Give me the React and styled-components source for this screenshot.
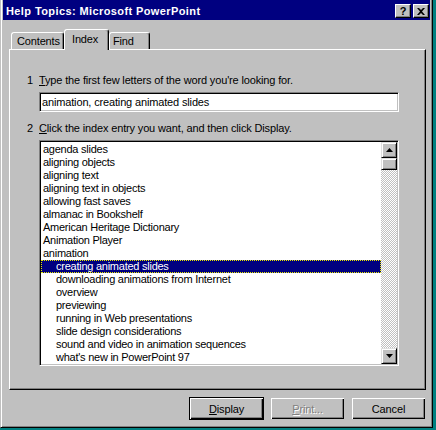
import React from 'react';
import styled, { createGlobalStyle } from 'styled-components';

const GlobalStyle = createGlobalStyle`
  html, body {
    margin: 0;
    background: #008080;
    overflow: hidden;
  }
  body {
    font-family: "Liberation Sans", Arial, sans-serif;
    font-size: 11px;
    letter-spacing: -0.15px;
    color: #000;
  }
`;

const Window = styled.div`
  width: 433px;
  height: 431px;
  margin-top: -3px;
  box-sizing: border-box;
  background: #c0c0c0;
  border: 1px solid;
  border-color: #c0c0c0 #000 #000 #c0c0c0;
  box-shadow: inset 1px 1px #fff, inset -1px -1px #808080;
  padding: 2px;
  display: flex;
  flex-direction: column;
`;

const TitleBar = styled.div`
  height: 20px;
  background: #000080;
  display: flex;
  align-items: center;
  padding: 2px 1px 0 3px;
  box-sizing: border-box;
`;

const Title = styled.div`
  flex: 1;
  color: #fff;
  font-weight: bold;
  font-size: 11px;
  letter-spacing: 0.4px;
`;

const TitleButton = styled.div`
  width: 16px;
  height: 14px;
  box-sizing: border-box;
  margin-left: ${(p) => (p.$gap ? '2px' : '0')};
  background: #c0c0c0;
  border: 1px solid;
  border-color: #fff #000 #000 #fff;
  box-shadow: inset -1px -1px #808080;
  display: flex;
  align-items: center;
  justify-content: center;
  font-weight: bold;
  font-size: 11px;
  line-height: 1;
`;

const Body = styled.div`
  padding: 9px 4px 0 6px;
  display: flex;
  flex-direction: column;
`;

const TabRow = styled.div`
  display: flex;
  align-items: flex-end;
  padding-left: 2px;
`;

const Tab = styled.div`
  position: relative;
  z-index: ${(p) => (p.$active ? 1 : 0)};
  width: ${(p) => p.$w}px;
  height: ${(p) => (p.$active ? 21 : 17)}px;
  margin-bottom: ${(p) => (p.$active ? -1 : 0)}px;
  box-sizing: border-box;
  background: #c0c0c0;
  border: 1px solid;
  border-bottom: none;
  border-color: #fff #000 transparent #fff;
  border-radius: 3px 3px 0 0;
  box-shadow: inset -1px 0 #808080;
  padding-left: ${(p) => p.$pad}px;
  padding-bottom: ${(p) => (p.$active ? 3 : 0)}px;
  display: flex;
  align-items: center;
`;

const Panel = styled.div`
  width: 417px;
  height: 341px;
  box-sizing: border-box;
  border: 1px solid;
  border-color: #fff #000 #000 #fff;
  box-shadow: inset -1px -1px #808080;
  padding: 24px 0 0 17px;
  display: flex;
  flex-direction: column;
`;

const Step = styled.div`
  display: grid;
  grid-template-columns: 12px 1fr;
  line-height: 13px;
  margin-top: ${(p) => p.$top}px;
`;

const Accel = styled.span`
  text-decoration: underline;
  text-underline-offset: 1px;
`;

const Sunken = styled.div`
  margin-left: 12px;
  width: 360px;
  box-sizing: border-box;
  background: #fff;
  border: 1px solid;
  border-color: #808080 #fff #fff #808080;
  box-shadow: inset 1px 1px #000, inset -1px -1px #c0c0c0;
  padding: 1px;
`;

const InputBox = styled(Sunken)`
  height: 20px;
  margin-top: 5px;
  display: flex;
  align-items: center;
  padding-left: 2px;
`;

const ListBox = styled(Sunken)`
  height: 226px;
  margin-top: 5px;
  display: flex;
  letter-spacing: -0.25px;
`;

const Rows = styled.div`
  flex: 1;
  display: flex;
  flex-direction: column;
  padding-top: 1px;
`;

const Row = styled.div`
  height: 13px;
  line-height: 13px;
  box-sizing: border-box;
  padding-left: ${(p) => (p.$sub ? 15 : 2)}px;
  white-space: nowrap;
  background: ${(p) => (p.$selected ? '#000080' : 'transparent')};
  color: ${(p) => (p.$selected ? '#fff' : '#000')};
  outline: ${(p) => (p.$selected ? '1px dotted #e8e800' : 'none')};
  outline-offset: -1px;
`;

const ScrollBar = styled.div`
  width: 16px;
  display: flex;
  flex-direction: column;
`;

const Raised = styled.div`
  box-sizing: border-box;
  background: #c0c0c0;
  border: 1px solid;
  border-color: #dfdfdf #000 #000 #dfdfdf;
  box-shadow: inset 1px 1px #fff, inset -1px -1px #808080;
`;

const ArrowButton = styled(Raised)`
  height: 16px;
  display: flex;
  align-items: center;
  justify-content: center;
`;

const Track = styled.div`
  flex: 1;
  background: repeating-conic-gradient(#fff 0 25%, #c0c0c0 0 50%) 0 0 / 2px 2px;
`;

const Thumb = styled(Raised)`
  height: 12px;
`;

const ButtonRow = styled.div`
  display: flex;
  justify-content: flex-end;
  gap: 6px;
  margin-top: 7px;
  width: 417px;
`;

const Button = styled.div`
  width: 75px;
  height: 23px;
  box-sizing: border-box;
  background: #c0c0c0;
  border: 1px solid ${(p) => (p.$default ? '#000' : 'transparent')};
  box-shadow: inset 1px 1px #fff, inset -1px -1px #000, inset -2px -2px #808080;
  display: flex;
  align-items: center;
  justify-content: center;
  color: ${(p) => (p.$disabled ? '#808080' : '#000')};
  text-shadow: ${(p) => (p.$disabled ? '1px 1px #fff' : 'none')};
`;

const Arrow = ({ down }) => (
  <svg width="7" height="4" viewBox="0 0 7 4" style={{ display: 'block' }}>
    <polygon points={down ? '0,0 7,0 3.5,4' : '0,4 7,4 3.5,0'} fill="#000" />
  </svg>
);

const CloseGlyph = () => (
  <svg width="8" height="7" viewBox="0 0 8 7" style={{ display: 'block' }}>
    <path d="M0 0h2l2 2 2-2h2L5 3.5 8 7H6L4 5 2 7H0l3-3.5z" fill="#000" />
  </svg>
);

const entries = [
  { t: 'agenda slides' },
  { t: 'aligning objects' },
  { t: 'aligning text' },
  { t: 'aligning text in objects' },
  { t: 'allowing fast saves' },
  { t: 'almanac in Bookshelf' },
  { t: 'American Heritage Dictionary' },
  { t: 'Animation Player' },
  { t: 'animation' },
  { t: 'creating animated slides', sub: true, selected: true },
  { t: 'downloading animations from Internet', sub: true },
  { t: 'overview', sub: true },
  { t: 'previewing', sub: true },
  { t: 'running in Web presentations', sub: true },
  { t: 'slide design considerations', sub: true },
  { t: 'sound and video in animation sequences', sub: true },
  { t: "what's new in PowerPoint 97", sub: true },
];

export default function App() {
  return (
    <>
      <GlobalStyle />
      <Window>
        <TitleBar>
          <Title>Help Topics: Microsoft PowerPoint</Title>
          <TitleButton>?</TitleButton>
          <TitleButton $gap>
            <CloseGlyph />
          </TitleButton>
        </TitleBar>
        <Body>
          <TabRow>
            <Tab $w={53} $pad={5}>Contents</Tab>
            <Tab $w={45} $pad={7} $active>Index</Tab>
            <Tab $w={41} $pad={3}>Find</Tab>
          </TabRow>
          <Panel>
            <Step $top={0}>
              <span>1</span>
              <span>
                <Accel>T</Accel>ype the first few letters of the word you're looking for.
              </span>
            </Step>
            <InputBox>animation, creating animated slides</InputBox>
            <Step $top={10}>
              <span>2</span>
              <span>
                <Accel>C</Accel>lick the index entry you want, and then click Display.
              </span>
            </Step>
            <ListBox>
              <Rows>
                {entries.map((e) => (
                  <Row key={e.t} $sub={e.sub} $selected={e.selected}>
                    {e.t}
                  </Row>
                ))}
              </Rows>
              <ScrollBar>
                <ArrowButton>
                  <Arrow />
                </ArrowButton>
                <Thumb />
                <Track />
                <ArrowButton>
                  <Arrow down />
                </ArrowButton>
              </ScrollBar>
            </ListBox>
          </Panel>
          <ButtonRow>
            <Button $default>
              <span>
                <Accel>D</Accel>isplay
              </span>
            </Button>
            <Button $disabled>
              <span>
                <Accel>P</Accel>rint...
              </span>
            </Button>
            <Button>Cancel</Button>
          </ButtonRow>
        </Body>
      </Window>
    </>
  );
}
